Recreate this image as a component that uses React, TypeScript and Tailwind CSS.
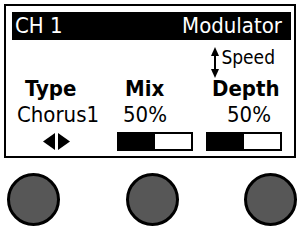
const FONT = "font-['DejaVu_Sans_Condensed','DejaVu_Sans',sans-serif]"

function UpDownArrow() {
  return (
    <svg width="8" height="31" viewBox="0 0 8 31" className="shrink-0">
      <polygon points="4,0 8,9 0,9" fill="black" />
      <rect x="3" y="8" width="2" height="15" fill="black" />
      <polygon points="0,22 8,22 4,31" fill="black" />
    </svg>
  )
}

function LeftRight() {
  return (
    <svg width="27" height="17" viewBox="0 0 27 17">
      <polygon points="0,8.5 12,0 12,17" fill="black" />
      <polygon points="27,8.5 15,0 15,17" fill="black" />
    </svg>
  )
}

function Bar() {
  return (
    <div className="w-[76px] h-[19px] border-2 border-black flex">
      <div className="w-1/2 h-full bg-black" />
    </div>
  )
}

export default function App() {
  return (
    <div className={`w-[298px] h-[228px] bg-white overflow-hidden pt-[4px] ${FONT}`}>
      {/* display */}
      <div className="ml-[4px] w-[292px] h-[154px] border-2 border-black pl-[6px] pt-[6px] pr-[3px]">
        <div className="h-[28px] bg-black text-white text-[22px] leading-[28px] flex justify-between pl-[3px] pr-[9px]">
          <span>CH 1</span>
          <span>Modulator</span>
        </div>

        <div className="h-[36px] flex justify-end items-start pt-[7px] pr-[16px]">
          <UpDownArrow />
          <span className="text-[19px] leading-[22px] ml-[2px] mt-[-1px]">Speed</span>
        </div>

        <div className="flex text-[22px] leading-[26px] font-bold">
          <div className="w-[98px] pl-[13px]">Type</div>
          <div className="w-[90px] pl-[15px]">Mix</div>
          <div className="w-[91px] pl-[12px]">Depth</div>
        </div>

        <div className="flex text-[22px] leading-[26px]">
          <div className="w-[98px] pl-[5px]">Chorus1</div>
          <div className="w-[90px] pl-[13px]">50%</div>
          <div className="w-[91px] pl-[27px]">50%</div>
        </div>

        <div className="flex items-center mt-[4px] h-[19px]">
          <div className="w-[98px] pl-[31px] flex">
            <LeftRight />
          </div>
          <div className="w-[96px] pl-[7px]">
            <Bar />
          </div>
          <div className="w-[85px]">
            <Bar />
          </div>
        </div>
      </div>

      {/* knobs */}
      <div className="mt-[15px] ml-[7px] w-[290px] flex justify-between">
        {[0, 1, 2].map((k) => (
          <div key={k} className="w-[53px] h-[53px] rounded-full border-[3px] border-black bg-[#575757]" />
        ))}
      </div>
    </div>
  )
}
